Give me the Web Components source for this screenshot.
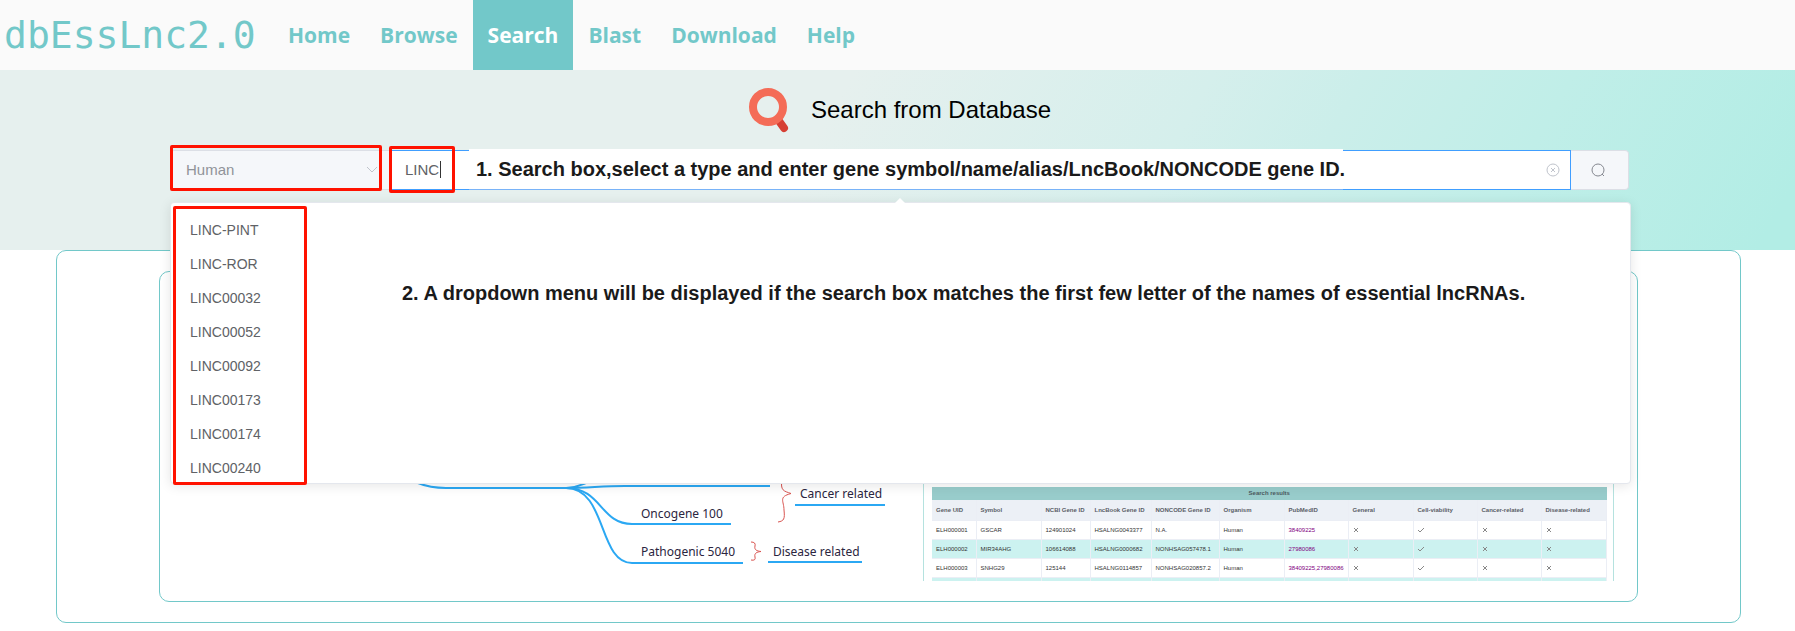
<!DOCTYPE html>
<html lang="en">
<head>
<meta charset="utf-8">
<title>dbEssLnc2.0 - Search</title>
<style>
body { margin: 0; background: #fff; font-family: "Liberation Sans", Arial, sans-serif; }
</style>
</head>
<body>
<db-page></db-page>
<script>
const define = (name, html, setup) => {
  const template = document.createElement('template');
  template.innerHTML = html;
  customElements.define(name, class extends HTMLElement {
    constructor() {
      super();
      this.attachShadow({ mode: 'open' }).append(template.content.cloneNode(true));
    }
    connectedCallback() { if (setup) setup(this, this.shadowRoot); }
  });
};

define('db-navbar', `
<style>
:host { display: flex; height: 70px; background: #fafafa; }
.logo { width: 273px; box-sizing: border-box; padding-left: 4px; font: 38px/70px "DejaVu Sans Mono", monospace; color: #72c8c9; text-decoration: none; }
nav { display: flex; }
nav a { padding: 0 15px; font: bold 21px/70px "Open Sans", "Noto Sans", sans-serif; color: #72c8c9; text-decoration: none; }
nav a[aria-current] { background: #72c8c9; color: #fff; }
</style>
<a class="logo" href="#">dbEssLnc2.0</a>
<nav>
<a href="#home">Home</a><a href="#browse">Browse</a><a href="#search" aria-current="page">Search</a><a href="#blast">Blast</a><a href="#download">Download</a><a href="#help">Help</a>
</nav>`);

define('db-suggestions', `
<style>
:host { display: block; box-sizing: border-box; height: 282px; background: #fff; border: 1px solid #e4e7ed; border-radius: 4px; box-shadow: 0 2px 12px rgba(0,0,0,.1); }
.arrow { position: absolute; top: -5px; left: calc(50% - 7px); width: 12px; height: 6px; }
ul { box-sizing: border-box; height: 280px; margin: 0; padding: 10px 0; overflow: hidden; list-style: none; }
li { padding: 0 19px; font-size: 14px; line-height: 34px; color: #606266; }
.note { position: absolute; top: 78px; left: 231px; margin: 0; font-size: 20px; line-height: 24px; font-weight: bold; color: #1a1a1a; white-space: nowrap; }
.mark { position: absolute; top: 3px; left: 2px; bottom: -2px; width: 134px; box-sizing: border-box; border: 3px solid #ff1200; border-radius: 2px; }
</style>
<svg class="arrow" viewBox="0 0 12 6"><path d="M0 6L6 0L12 6Z" fill="#fff"/></svg>
<ul></ul>
<p class="note">2. A dropdown menu will be displayed if the search box matches the first few letter of the names of essential lncRNAs.</p>
<div class="mark"></div>`, (host, root) => {
  root.querySelector('ul').innerHTML = ['LINC-PINT', 'LINC-ROR', 'LINC00032', 'LINC00052', 'LINC00092', 'LINC00173', 'LINC00174', 'LINC00240'].map(n => `<li>${n}</li>`).join('');
});

define('db-search-bar', `
<style>
:host { display: flex; position: relative; height: 40px; }
.type { position: relative; width: 220px; box-sizing: border-box; }
select { width: 100%; height: 40px; box-sizing: border-box; appearance: none; margin: 0; padding: 0 15px 2px; border: 1px solid #dcdfe6; border-right: 0; border-radius: 4px 0 0 4px; background: #f5f7fa; color: #909399; opacity: 1; font: 15px "Liberation Sans", Arial, sans-serif; }
.chevron { position: absolute; right: 12px; top: 16px; width: 12px; height: 8px; }
.field { position: relative; flex: 1; }
input { width: 100%; height: 40px; box-sizing: border-box; margin: 0; padding: 0 14px 2px; border: 1px solid #409eff; background: #fff; color: #606266; font: 15px "Liberation Sans", Arial, sans-serif; outline: 0; }
.caret { position: absolute; left: 50px; top: 11px; width: 1px; height: 17px; background: #333; }
.clear { position: absolute; right: 11px; top: 13px; width: 14px; height: 14px; padding: 0; border: 0; background: none; }
.go { width: 58px; box-sizing: border-box; padding: 0; border: 1px solid #dcdfe6; border-left: 0; border-radius: 0 4px 4px 0; background: #f5f7fa; display: grid; place-items: center; }
svg { display: block; fill: none; }
.go svg { margin-right: 3px; }
.note { position: absolute; top: -1px; left: 299px; width: 874px; height: 41px; box-sizing: border-box; margin: 0; padding-left: 7px; background: #fff; font-size: 20px; line-height: 40px; font-weight: bold; color: #1a1a1a; border-bottom: 1px solid #79b3f8; white-space: nowrap; }
.mark { position: absolute; box-sizing: border-box; border: 3px solid #ff1200; border-radius: 2px; }
.mark.one { left: 0; top: -5px; width: 212px; height: 46px; }
.mark.two { left: 219px; top: -4px; width: 66px; height: 47px; }
db-suggestions { position: absolute; top: 52px; left: 0; right: -2px; z-index: 2; }
</style>
<div class="type">
<select aria-label="Species" disabled><option>Human</option></select>
<svg class="chevron" viewBox="0 0 12 8" stroke="#c0c4cc"><path d="M1 1L6 6L11 1"/></svg>
</div>
<div class="field">
<input type="text" value="LINC" aria-label="Gene search">
<span class="caret"></span>
<button class="clear" aria-label="Clear"><svg viewBox="0 0 14 14" stroke="#c0c4cc"><circle cx="7" cy="7" r="6"/><path d="M5 5L9 9M9 5L5 9"/></svg></button>
</div>
<button class="go" aria-label="Search"><svg width="14" height="14" viewBox="0 0 14 14" stroke="#858890"><circle cx="7" cy="7" r="6"/><path d="M11 11L13 13"/></svg></button>
<p class="note">1. Search box,select a type and enter gene symbol/name/alias/LncBook/NONCODE gene ID.</p>
<div class="mark one"></div><div class="mark two"></div>
<db-suggestions></db-suggestions>`);

define('db-hero', `
<style>
:host { display: block; height: 180px; padding: 0 166px 0 170px; background: linear-gradient(120deg, #e6f0ee 45%, #d5efec 64%, #cbeeea 72%, #c0eee8 83%, #b2ede5 98%); }
.title { display: flex; align-items: center; justify-content: center; gap: 22px; height: 80px; }
h1 { margin: 0; font-size: 24px; line-height: 28px; font-weight: normal; color: #000; }
</style>
<div class="title">
<svg width="41" height="46" viewBox="0 0 41 46" fill="none"><path d="M31 34L36 41" stroke="#d63f33" stroke-width="8" stroke-linecap="round"/><circle cx="20" cy="20" r="15" stroke="#f46c57" stroke-width="8"/></svg>
<h1>Search from Database</h1>
</div>
<db-search-bar></db-search-bar>`);

define('db-mindmap', `
<style>
:host { display: block; }
svg { display: block; }
text { font: 12px "Noto Sans", "Open Sans", sans-serif; fill: #2b2540; }
</style>
<svg width="490" height="110" viewBox="410 470 490 110" fill="none" role="img" aria-label="Essential lncRNA categories">
<g stroke="#2ba8f3" stroke-width="2">
<path d="M418 482Q430 487 446 487H566C590 487 600 485 625 485H770"/>
<path d="M566 487C576 487 580 484 586 482"/>
<path d="M566 487C602 487 600 523 632 523H731"/>
<path d="M566 487C607 487 598 562 632 562H743"/>
<path d="M795 504H885M768 561H862"/>
</g>
<g stroke="#d9534f">
<path d="M782 478C780 490 784 490 791 492.500C778 496 784 500 784 509C785 518 784 520 778 521"/>
<path d="M751 541Q756 541 755 545C754 549 757 550 761 550.500C757 551 754 552 755 556Q756 560 751 559"/>
</g>
<text x="641" y="517">Oncogene 100</text>
<text x="641" y="555">Pathogenic 5040</text>
<text x="800" y="497">Cancer related</text>
<text x="773" y="555">Disease related</text>
</svg>`);

define('db-results', `
<style>
:host { display: block; box-sizing: border-box; height: 106px; padding: 12px 8px 0; overflow: hidden; border: solid #b5e2df; border-width: 0 1px; }
table { width: 100%; table-layout: fixed; border-collapse: collapse; font-size: 6px; line-height: 8px; color: #333; background: #fff; }
caption { height: 13px; line-height: 13px; background: #98cccb; font-weight: bold; font-size: 6px; color: #4c5a60; }
th, td { box-sizing: border-box; height: 19px; padding: 0 0 0 4px; text-align: left; white-space: nowrap; border-right: 1px solid #ebeef5; border-bottom: 1px solid #ebeef5; }
th { height: 20px; background: #ecf0f6; color: #5a5e66; }
tbody tr:nth-child(even) td { background: #ccf2f0; }
a { color: #800080; text-decoration: none; }
svg { display: block; width: 6px; height: 6px; fill: none; stroke: #888; }
</style>
<table>
<caption>Search results</caption>
<colgroup></colgroup>
<thead><tr></tr></thead>
<tbody></tbody>
</table>`, (host, root) => {
  const widths = [44, 65, 49, 61, 68, 65, 64, 65, 64, 64, 65];
  const heads = ['Gene UID', 'Symbol', 'NCBI Gene ID', 'LncBook Gene ID', 'NONCODE Gene ID', 'Organism', 'PubMedID', 'General', 'Cell-viability', 'Cancer-related', 'Disease-related'];
  const rows = [
    ['ELH000001', 'GSCAR', '124901024', 'HSALNG0043377', 'N.A.', 'Human', '38409225'],
    ['ELH000002', 'MIR34AHG', '106614088', 'HSALNG0000682', 'NONHSAG057478.1', 'Human', '27980086'],
    ['ELH000003', 'SNHG29', '125144', 'HSALNG0114857', 'NONHSAG020857.2', 'Human', '38409225,27980086'],
    ['', '', '', '', '', '', '']
  ];
  const no = '<svg viewBox="0 0 6 6" role="img" aria-label="no"><path d="M1 1L5 5M5 1L1 5"/></svg>';
  const yes = '<svg viewBox="0 0 6 6" role="img" aria-label="yes"><path d="M0 3L2 5L6 1"/></svg>';
  root.querySelector('colgroup').innerHTML = widths.map(w => `<col style="width:${w}px">`).join('');
  root.querySelector('thead tr').innerHTML = heads.map(h => `<th>${h}</th>`).join('');
  root.querySelector('tbody').innerHTML = rows.map(r => {
    const marks = r[0] ? [no, yes, no, no] : ['', '', '', ''];
    return '<tr>' + r.map((c, i) => `<td>${i === 6 && c ? `<a href="#${c}">${c}</a>` : c}</td>`).join('') + marks.map(m => `<td>${m}</td>`).join('') + '</tr>';
  }).join('');
});

define('db-panel', `
<style>
:host { display: block; border: 1px solid #72c8c9; border-radius: 10px; background: #fff; }
</style>
<slot></slot>`);

define('db-page', `
<style>
:host { display: block; }
db-hero { position: relative; z-index: 1; }
.outer { margin: 0 54px 9px 56px; padding: 20px 102px; }
.figures { display: flex; align-items: flex-end; justify-content: flex-end; gap: 23px; padding: 199px 23px 20px; }
db-results { flex: none; width: 691px; }
</style>
<db-navbar></db-navbar>
<db-hero></db-hero>
<db-panel class="outer"><db-panel><div class="figures"><db-mindmap></db-mindmap><db-results></db-results></div></db-panel></db-panel>`);
</script>
</body>
</html>
